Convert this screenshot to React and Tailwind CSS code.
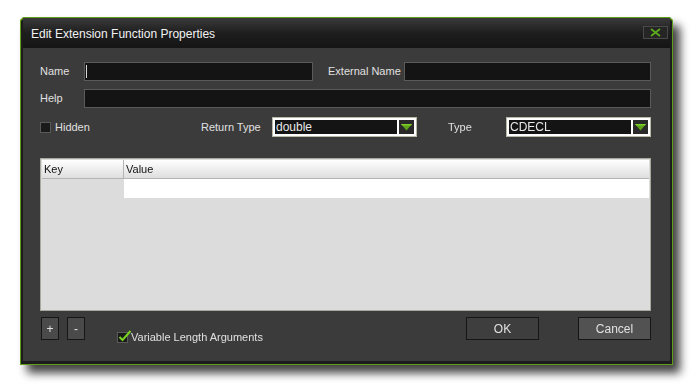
import { useState } from 'react'

const font = { fontFamily: '"Liberation Sans", Arial, sans-serif' }

function TextBox({ className, cursor }) {
  return (
    <div className={`h-[19px] shrink-0 bg-[#141414] border border-[#5a5a5a] flex items-center pl-[1px] ${className}`}>
      {cursor && <div className="w-px h-[13px] bg-[#d8d8d8]" />}
    </div>
  )
}

function Select({ value }) {
  return (
    <div className="w-[145px] h-[20px] shrink-0 bg-white border border-[#b8b8a8] p-[2px] flex">
      <div className="flex-1 bg-[#141414] text-[#e8e8e8] text-[12px] leading-[15px] pl-[1px]">{value}</div>
      <div className="w-[15px] ml-[2px] bg-[#2a2a2a] flex items-center justify-center">
        <svg width="11" height="7" viewBox="0 0 11 7">
          <polygon points="0,0 11,0 5.5,6.5" fill="#5fa31a" />
          <polygon points="0,0 11,0 10,1.5 1,1.5" fill="#7fcf2a" />
        </svg>
      </div>
    </div>
  )
}

function Checkbox({ checked }) {
  return (
    <div className="relative w-[11px] h-[11px] shrink-0 bg-[#1a1a1a] border border-[#5a5a5a]">
      {checked && (
        <svg className="absolute -top-[4px] left-0" width="14" height="14" viewBox="0 0 14 14">
          <path d="M1.5 8 L4.5 11 L12.5 2" stroke="#79d21e" strokeWidth="2" fill="none" />
        </svg>
      )}
    </div>
  )
}

function DlgButton({ children, className }) {
  return (
    <div className={`h-[23px] shrink-0 border border-[#161616] flex items-center justify-center text-[#e0e0e0] text-[12px] ${className}`}>
      {children}
    </div>
  )
}

export default function App() {
  const [rows] = useState([{ key: '', value: '' }])

  return (
    <div className="w-[693px] h-[385px] bg-white overflow-hidden" style={font}>
      <div className="ml-[20px] mt-[17px] w-[653px] h-[348px] drop-shadow-[7px_8px_5px_rgba(0,0,0,0.75)]">
        <div className="w-full h-full bg-[#5e9e19] p-px [clip-path:polygon(3px_0,650px_0,653px_3px,653px_100%,0_100%,0_3px)]">
          <div className="w-full h-full bg-[#1c1c1c] px-[2px] pb-[3px] flex flex-col [clip-path:polygon(3px_0,648px_0,651px_3px,651px_100%,0_100%,0_3px)]">
            {/* title bar */}
            <div className="h-[30px] shrink-0 flex items-center justify-between pl-[8px] pr-[2px] bg-gradient-to-b from-[#3a3a3a] via-[#1e1e1e] to-[#151515]">
              <span className="text-[#f2f2f2] text-[12px] mt-[2px]">Edit Extension Function Properties</span>
              <div className="w-[25px] h-[13px] mb-[2px] border border-[#4a4a4a] bg-[#252525] flex items-center justify-center">
                <svg width="11" height="9" viewBox="0 0 11 9">
                  <path d="M1 1 L10 8 M10 1 L1 8" stroke="#5fae1c" strokeWidth="1.6" />
                </svg>
              </div>
            </div>

            {/* body */}
            <div className="flex-1 bg-[#3b3b3b] pl-[17px] pr-[18px] pt-[14px] text-[#e0e0e0] text-[11px] flex flex-col whitespace-nowrap">
              <div className="flex items-center h-[19px]">
                <span className="w-[44px]">Name</span>
                <TextBox className="w-[229px]" cursor />
                <span className="ml-[15px] w-[76px]">External Name</span>
                <TextBox className="w-[247px]" />
              </div>

              <div className="flex items-center h-[19px] mt-[8px]">
                <span className="w-[44px]">Help</span>
                <TextBox className="w-[567px]" />
              </div>

              <div className="flex items-center h-[20px] mt-[9px]">
                <div className="w-[161px] flex items-center">
                  <Checkbox />
                  <span className="ml-[4px]">Hidden</span>
                </div>
                <span className="w-[71px]">Return Type</span>
                <Select value="double" />
                <span className="ml-[31px] w-[58px]">Type</span>
                <Select value="CDECL" />
              </div>

              <div className="mt-[21px] w-[611px] h-[153px] border border-[#a8a89c] bg-[#dcdcdc] p-px flex flex-col">
                <div className="h-[19px] flex bg-gradient-to-b from-white to-[#dedede] border-b border-[#b4b4b4] text-[#111]">
                  <div className="w-[82px] pl-[2px] border-r border-[#b4b4b4] flex items-center">Key</div>
                  <div className="flex-1 pl-[2px] flex items-center">Value</div>
                </div>
                {rows.map((r, i) => (
                  <div key={i} className="h-[19px] flex">
                    <div className="w-[82px] bg-[#dcdcdc]">{r.key}</div>
                    <div className="flex-1 bg-white">{r.value}</div>
                  </div>
                ))}
              </div>

              <div className="flex items-start mt-[6px] pr-[1px]">
                <DlgButton className="w-[18px] bg-[#4a4a4a] ml-px">+</DlgButton>
                <DlgButton className="w-[18px] bg-[#4a4a4a] ml-[8px]">-</DlgButton>
                <div className="flex items-center mt-[12px] ml-[32px]">
                  <Checkbox checked />
                  <span className="ml-[3px]">Variable Length Arguments</span>
                </div>
                <DlgButton className="w-[73px] bg-[#3e3e3e] ml-auto">OK</DlgButton>
                <DlgButton className="w-[73px] bg-[#525252] ml-[39px]">Cancel</DlgButton>
              </div>
            </div>
          </div>
        </div>
      </div>
    </div>
  )
}
